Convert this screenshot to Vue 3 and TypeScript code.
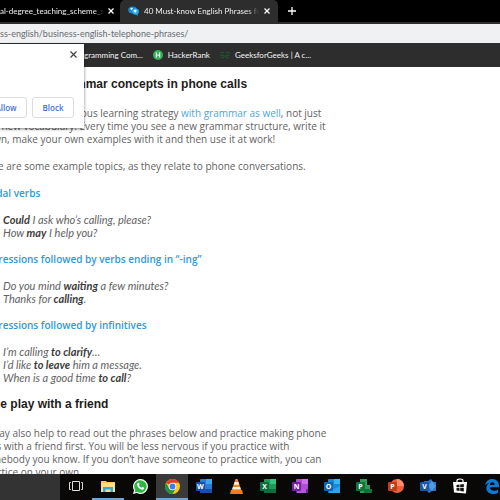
<script setup lang="ts">
interface OfficeApp {
  name: string
  letter: string
  dark: string
  mid: string
  light: string
  shape: 'sheet' | 'round' | 'step' | 'diamond'
}

const officeApps: Record<string, OfficeApp> = {
  word: { name: 'Word', letter: 'W', dark: '#174fae', mid: '#2b7cd3', light: '#41a5ee', shape: 'sheet' },
  excel: { name: 'Excel', letter: 'X', dark: '#126b3c', mid: '#1b9a59', light: '#33c481', shape: 'sheet' },
  onenote: { name: 'OneNote', letter: 'N', dark: '#77209b', mid: '#ad4fd2', light: '#ca73e8', shape: 'sheet' },
  outlook: { name: 'Outlook', letter: 'O', dark: '#0867b4', mid: '#1689da', light: '#35b8f1', shape: 'sheet' },
  project: { name: 'Project', letter: 'P', dark: '#13713a', mid: '#2b9b5b', light: '#37b36c', shape: 'step' },
  powerpoint: { name: 'PowerPoint', letter: 'P', dark: '#c13b1b', mid: '#e8603e', light: '#ff8f6b', shape: 'round' },
  visio: { name: 'Visio', letter: 'V', dark: '#1855ab', mid: '#2e75c8', light: '#4a9ae4', shape: 'diamond' },
}

const taskbar = [
  { id: 'tasks', label: 'Task view' },
  { id: 'files', label: 'File Explorer', open: true },
  { id: 'whatsapp', label: 'WhatsApp' },
  { id: 'chrome', label: 'Chrome', open: true, active: true },
  { id: 'word', label: 'Word' },
  { id: 'vlc', label: 'VLC' },
  { id: 'excel', label: 'Excel' },
  { id: 'onenote', label: 'OneNote' },
  { id: 'outlook', label: 'Outlook' },
  { id: 'project', label: 'Project' },
  { id: 'powerpoint', label: 'PowerPoint' },
  { id: 'visio', label: 'Visio' },
  { id: 'store', label: 'Store' },
  { id: 'edge', label: 'Edge' },
]
</script>

<template>
  <div class="screen">
    <header class="browser">
      <div class="tabs">
        <div class="tab back">
          <span class="tab-title">al-degree_teaching_scheme_sy</span>
          <button class="icon-btn" aria-label="Close tab">
            <svg width="6" height="6" viewBox="0 0 6 6"><path d="M.5.5l5 5M5.5.5l-5 5" /></svg>
          </button>
        </div>
        <div class="tab front">
          <svg class="favicon" width="11" height="10" viewBox="0 0 11 10">
            <ellipse cx="4.6" cy="4" rx="4.4" ry="3.6" fill="#1789cf" />
            <ellipse cx="7.5" cy="5.6" rx="3.4" ry="3.1" fill="#29a9e8" />
            <path d="M7.5 8l2.2 2-.2-3z" fill="#29a9e8" />
            <path d="M2 2.5l2-1 1 1-1.500 1.700zM5.400 4.300l2-.9 1.400 1.200-1 2.200-1.500-.6z" fill="#d8f3ff" />
          </svg>
          <span class="tab-title">40 Must-know English Phrases for</span>
          <button class="icon-btn" aria-label="Close tab">
            <svg width="6" height="6" viewBox="0 0 6 6"><path d="M.5.5l5 5M5.5.5l-5 5" /></svg>
          </button>
        </div>
        <button class="icon-btn new-tab" aria-label="New tab">
          <svg width="8" height="8" viewBox="0 0 8 8"><path d="M4 0v8M0 4h8" /></svg>
        </button>
      </div>
      <div class="address">
        <input aria-label="Address" value="ss-english/business-english-telephone-phrases/" />
      </div>
      <nav class="bookmarks">
        <a class="mark" href="#">Programming Com...</a>
        <a class="mark" href="#">
          <svg width="10" height="10" viewBox="0 0 10 10">
            <circle cx="5" cy="5" r="5" fill="#2fb457" />
            <path d="M3.4 2.4v5.2M6.6 2.4v5.2M3.4 5h3.2" stroke="#fff" stroke-width="1.2" fill="none" />
          </svg>
          HackerRank
        </a>
        <a class="mark" href="#">
          <svg width="10" height="8" viewBox="0 0 10 8" fill="none" stroke="#1c5a38">
            <path d="M4 1.500H1.500a1.400 1.400 0 0 0-.8 2.700h3.400v1.500c0 1-2.200 1.400-3 .8M6 1.500h2.500a1.400 1.400 0 0 1 .8 2.700H5.900v1.500c0 1 2.200 1.400 3 .8" />
          </svg>
          GeeksforGeeks | A c...
        </a>
      </nav>
      <section class="prompt" aria-label="Site permission">
        <button class="prompt-close" aria-label="Dismiss">
          <svg width="7" height="7" viewBox="0 0 7 7"><path d="M.5.5l6 6M6.500.5l-6 6" /></svg>
        </button>
        <div class="prompt-actions">
          <button class="choice">Allow</button>
          <button class="choice">Block</button>
        </div>
      </section>
    </header>

    <main class="page">
      <article class="article">
        <h2>How to learn grammar concepts in phone calls</h2>
        <p>
          You can use the previous learning strategy <a href="#">with grammar as well</a>, not just<br />
          and new vocabulary. Every time you see a new grammar structure, write it<br />
          down, make your own examples with it and then use it at work!
        </p>
        <p>Here are some example topics, as they relate to phone conversations.</p>
        <h3>Modal verbs</h3>
        <blockquote>
          <strong>Could</strong> I ask who’s calling, please?<br />
          How <strong>may</strong> I help you?
        </blockquote>
        <h3>Expressions followed by verbs ending in “-ing”</h3>
        <blockquote>
          Do you mind <strong>waiting</strong> a few minutes?<br />
          Thanks for <strong>calling</strong>.
        </blockquote>
        <h3>Expressions followed by infinitives</h3>
        <blockquote>
          I’m calling <strong>to clarify</strong>…<br />
          I’d like <strong>to leave</strong> him a message.<br />
          When is a good time <strong>to call</strong>?
        </blockquote>
        <h2>Role play with a friend</h2>
        <p>
          It may also help to read out the phrases below and practice making phone<br />
          calls with a friend first. You will be less nervous if you practice with<br />
          somebody you know. If you don’t have someone to practice with, you can<br />
          practice on your own.
        </p>
      </article>
    </main>

    <footer class="taskbar">
      <div class="search"></div>
      <button
        v-for="item in taskbar"
        :key="item.id"
        class="task"
        :class="{ open: item.open, active: item.active }"
        :aria-label="item.label"
      >
        <svg v-if="officeApps[item.id]" width="16" height="16" viewBox="0 0 16 16">
          <template v-if="officeApps[item.id].shape === 'sheet'">
            <rect x="4" y="1" width="12" height="14" rx="1" :fill="officeApps[item.id].mid" />
            <rect x="10" y="1" width="6" height="5" :fill="officeApps[item.id].light" />
            <rect x="4" y="11" width="12" height="4" :fill="officeApps[item.id].dark" />
            <path v-if="item.id === 'outlook'" d="M5 8l5 3 6-3v7H5z" fill="#29a5e8" />
            <rect v-if="item.id === 'onenote'" x="5" y="11" width="9" height="4" fill="#b158d5" />
          </template>
          <template v-else-if="officeApps[item.id].shape === 'round'">
            <circle cx="9" cy="8" r="7" :fill="officeApps[item.id].mid" />
            <path d="M9 1a7 7 0 0 1 7 7H9z" :fill="officeApps[item.id].light" />
          </template>
          <template v-else-if="officeApps[item.id].shape === 'step'">
            <path d="M4 1h7v6h3v4h2v4H4z" :fill="officeApps[item.id].mid" />
            <path d="M8 11h8v4H8z" :fill="officeApps[item.id].dark" />
          </template>
          <template v-else>
            <path d="M4 3h4l3-2 2 3h3v9h-4l-3 2-3-3H4z" :fill="officeApps[item.id].mid" />
            <path d="M12 3l4 5-4 5-4-5z" :fill="officeApps[item.id].light" />
          </template>
          <rect x="0" y="4" width="9" height="9" rx="1" :fill="officeApps[item.id].dark" />
          <text x="4.5" y="11" text-anchor="middle" class="letter">{{ officeApps[item.id].letter }}</text>
        </svg>

        <svg v-else-if="item.id === 'tasks'" width="14" height="12" viewBox="0 0 14 12" fill="none" stroke="#dcdcdc">
          <path d="M3.500 1.500h7v9h-7zM1.800 2.500H.5v7h1.300M12.200 2.500h1.300v7h-1.300" />
        </svg>

        <svg v-else-if="item.id === 'files'" width="14" height="13" viewBox="0 0 14 13">
          <path d="M0 1h5l1 1h8v10H0z" fill="#f6c954" />
          <path d="M0 3h14v9H0z" fill="#fbe08a" />
          <path d="M2 7h10v5H9.500V9.500h-5V12H2z" fill="#35a9e0" />
        </svg>

        <svg v-else-if="item.id === 'whatsapp'" width="15" height="15" viewBox="0 0 16 16">
          <path d="M8 0a8 8 0 0 1 0 16 8 8 0 0 1-3.800-1L0 16l1.100-4A8 8 0 0 1 8 0z" fill="#f2fff4" />
          <path d="M8 1.200a6.700 6.700 0 1 1-3.500 12.500L1.700 14.400l.8-2.700A6.700 6.700 0 0 1 8 1.200z" fill="#2cb742" />
          <path d="M5.300 4l1 .1.8 1.800-.7 1c.6 1.200 1.400 2 2.600 2.500l1-1.100 1.900.9c.1 1.500-1 2.200-2.100 2.200C7 11.100 4.400 8 4.200 5.900c0-.8.500-1.500 1.100-1.900z" fill="#fff" />
        </svg>

        <svg v-else-if="item.id === 'chrome'" width="15" height="15" viewBox="0 0 16 16">
          <circle cx="8" cy="8" r="8" fill="#fbc916" />
          <path d="M8 8L1.070 4A8 8 0 0 1 14.930 4H8z" fill="#e33b2e" />
          <path d="M1.070 4A8 8 0 0 0 8 16l3.460-6L8 8l-3.460 2z" fill="#229342" />
          <circle cx="8" cy="8" r="4" fill="#fff" />
          <circle cx="8" cy="8" r="3.100" fill="#3b7fe8" />
        </svg>

        <svg v-else-if="item.id === 'vlc'" width="13" height="15" viewBox="0 0 13 15">
          <path d="M5.500 0h2l4 12h-10z" fill="#f48b1c" />
          <path d="M4.600 3h3.800l.9 2.700H3.700zM2.900 8h7.200l.7 2.200H2.200z" fill="#f4f1ec" />
          <path d="M1 11h1.500c1 1.400 7 1.400 8 0H12l1 4H0z" fill="#f27c0c" />
        </svg>

        <svg v-else-if="item.id === 'store'" width="14" height="16" viewBox="0 0 14 16">
          <path d="M4 5V2.500C4 .5 10 .5 10 2.500V5" fill="none" stroke="#fff" stroke-width="1.200" />
          <path d="M0 4h14l-1 11.500L1 14.500z" fill="#fff" />
          <path d="M3.500 6.900l3-.4v2.800h-3zM7.200 6.400l3.600-.4v3.300H7.200zM3.500 10h3v2.900l-3-.4zM7.200 10h3.600v3.400l-3.600-.4z" fill="#111" />
        </svg>

        <svg v-else width="14" height="15" viewBox="0 0 14 15">
          <path
            d="M0 6.600C.6 2.400 3.600 0 7.300 0 11.500 0 14 3 14 6.600v1.700H4.800c.1 2.300 2 3.500 4.400 3.500 1.500 0 2.800-.4 3.900-1.100v3.100c-1.400.8-3 1.200-4.900 1.200-4.100 0-6.800-2.300-6.800-6 0-2.500 1.400-4.500 3.600-5.500C2.700 4 1 5 0 6.600zm4.900-.7h4.700c0-1.500-.8-2.600-2.300-2.600-1.400 0-2.200 1.200-2.400 2.600z"
            fill="#0c7bd8"
          />
        </svg>
      </button>
    </footer>
  </div>
</template>

<style>
body {
  margin: 0;
  background: #fff;
}
</style>

<style scoped>
.screen {
  display: flex;
  flex-direction: column;
  height: 100vh;
  overflow: hidden;
  font-family: Lato, 'Open Sans', sans-serif;
}
button {
  padding: 0;
  border: 0;
  background: none;
  font: inherit;
}
svg {
  display: block;
  flex: none;
}
.browser {
  position: relative;
  flex: none;
}
.tabs {
  display: flex;
  height: 22px;
  background: #000;
  border-bottom: 2px solid #2d2d2d;
  color: #f0f0f0;
  font-size: 8px;
}
.tab {
  display: flex;
  align-items: center;
  box-sizing: border-box;
}
.tab-title {
  flex: 1;
  overflow: hidden;
  white-space: nowrap;
  mask-image: linear-gradient(to right, #000 90%, transparent);
}
.back {
  width: 120px;
  padding-right: 6px;
  gap: 4px;
}
.front {
  width: 158px;
  padding: 0 8px;
  gap: 5px;
  background: #2d2d2d;
  border-radius: 5px 5px 0 0;
}
.icon-btn svg {
  fill: none;
  stroke: #fff;
  stroke-width: 1.3;
}
.new-tab {
  margin-left: 10px;
}
.address {
  display: flex;
  height: 19px;
  background: #f0f1f3;
}
.address input {
  flex: 1;
  min-width: 0;
  padding: 0;
  border: 0;
  outline: 0;
  background: transparent;
  color: #686c70;
  font: 9px Lato, sans-serif;
}
.bookmarks {
  display: flex;
  align-items: center;
  height: 24px;
  padding-left: 72px;
  gap: 10px;
  background: #2d2d2d;
  font-size: 8px;
}
.mark {
  display: flex;
  align-items: center;
  gap: 5px;
  color: #f4f4f4;
  text-decoration: none;
  white-space: nowrap;
}
.prompt {
  position: absolute;
  top: 44px;
  left: 0;
  z-index: 2;
  display: flex;
  flex-direction: column;
  justify-content: space-between;
  box-sizing: border-box;
  width: 84px;
  height: 84px;
  padding: 7px 10px 10px 0;
  background: #fff;
  box-shadow: 0 1px 3px rgba(0, 0, 0, 0.5);
}
.prompt-close {
  align-self: flex-end;
  margin-right: -3px;
}
.prompt-close svg {
  fill: none;
  stroke: #444;
  stroke-width: 1.2;
}
.prompt-actions {
  display: flex;
  justify-content: flex-end;
  gap: 5px;
}
.choice {
  flex: none;
  box-sizing: border-box;
  width: 42px;
  height: 21px;
  border: 1px solid #dadce0;
  border-radius: 3px;
  color: #4274d6;
  font: 600 8px 'Open Sans', sans-serif;
}
.page {
  flex: 1;
  min-height: 0;
  overflow: hidden;
  background: #fff;
}
.article {
  margin-left: -19px;
  padding-top: 11px;
  color: #626262;
  font: 10px/13px 'Open Sans', sans-serif;
  white-space: nowrap;
}
.article h2 {
  margin: 0 0 16px;
  color: #1c1c1c;
  font: bold 12px/13px 'Liberation Sans', sans-serif;
}
.article p {
  margin: 0 0 14px;
}
.article a {
  color: #4ba6e2;
  text-decoration: none;
}
.article h3 {
  margin: 0 0 13px;
  color: #2f98de;
  font: 600 10px/13px 'Open Sans', sans-serif;
}
.article blockquote {
  margin: 0 0 14px 22px;
  font: italic 11px/13px Lato, sans-serif;
}
.article strong {
  color: #3c3c3c;
}
.taskbar {
  display: flex;
  flex: none;
  height: 26px;
  background: #090806;
}
.search {
  flex: none;
  width: 60px;
  background: #333;
}
.task {
  display: flex;
  flex: none;
  align-items: center;
  justify-content: center;
  box-sizing: border-box;
  width: 32px;
  border-bottom: 2px solid transparent;
}
.task.open {
  border-bottom-color: #6da5d8;
}
.task.active {
  background: #3a3a3a;
}
.letter {
  fill: #fff;
  font: bold 7px 'Open Sans', sans-serif;
}
</style>
